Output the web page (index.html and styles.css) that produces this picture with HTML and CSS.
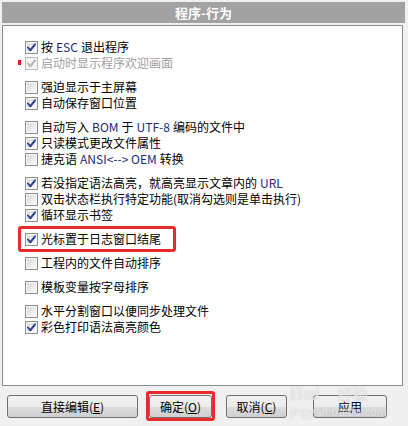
FILE: index.html
```html
<!DOCTYPE html>
<html lang="zh-CN">
<head>
    <meta charset="UTF-8">
    <title>程序-行为</title>
    <link rel="stylesheet" href="styles.css">
</head>
<body>
    <div class="title">程序-行为</div>

    <div class="panel">
        <div class="group">
            <label class="row"><span class="cb on"><svg viewBox="0 0 11 11"><path d="M2 5.5 L4.3 8.3 L9 2.3"/></svg></span>按 <span class="en">ESC</span> 退出程序</label>
            <label class="row off"><span class="mark"></span><span class="cb on"><svg viewBox="0 0 11 11"><path d="M2 5.5 L4.3 8.3 L9 2.3"/></svg></span>启动时显示程序欢迎画面</label>
        </div>
        <div class="group">
            <label class="row"><span class="cb"></span>强迫显示于主屏幕</label>
            <label class="row"><span class="cb on"><svg viewBox="0 0 11 11"><path d="M2 5.5 L4.3 8.3 L9 2.3"/></svg></span>自动保存窗口位置</label>
        </div>
        <div class="group">
            <label class="row"><span class="cb"></span>自动写入 <span class="en">BOM</span> 于 <span class="en">UTF-8</span> 编码的文件中</label>
            <label class="row"><span class="cb on"><svg viewBox="0 0 11 11"><path d="M2 5.5 L4.3 8.3 L9 2.3"/></svg></span>只读模式更改文件属性</label>
            <label class="row"><span class="cb"></span>捷克语 <span class="en">ANSI&lt;--&gt; OEM</span> 转换</label>
        </div>
        <div class="group">
            <label class="row"><span class="cb on"><svg viewBox="0 0 11 11"><path d="M2 5.5 L4.3 8.3 L9 2.3"/></svg></span>若没指定语法高亮，就高亮显示文章内的 <span class="en">URL</span></label>
            <label class="row"><span class="cb"></span>双击状态栏执行特定功能(取消勾选则是单击执行)</label>
            <label class="row"><span class="cb on"><svg viewBox="0 0 11 11"><path d="M2 5.5 L4.3 8.3 L9 2.3"/></svg></span>循环显示书签</label>
        </div>
        <div class="group">
            <label class="row"><span class="hl"></span><span class="cb on"><svg viewBox="0 0 11 11"><path d="M2 5.5 L4.3 8.3 L9 2.3"/></svg></span>光标置于日志窗口结尾</label>
        </div>
        <div class="group">
            <label class="row"><span class="cb"></span>工程内的文件自动排序</label>
        </div>
        <div class="group">
            <label class="row"><span class="cb"></span>模板变量按字母排序</label>
        </div>
        <div class="group">
            <label class="row"><span class="cb"></span>水平分割窗口以便同步处理文件</label>
            <label class="row"><span class="cb on"><svg viewBox="0 0 11 11"><path d="M2 5.5 L4.3 8.3 L9 2.3"/></svg></span>彩色打印语法高亮颜色</label>
        </div>
    </div>

    <div class="buttons">
        <button class="btn b-edit">直接编辑(<u>E</u>)</button>
        <button class="btn b-ok"><span class="hl-btn"></span>确定(<u>O</u>)</button>
        <button class="btn b-cancel">取消(<u>C</u>)</button>
        <button class="btn b-apply">应用</button>
    </div>

    <div class="watermark">
        <div class="wm-top">Bai<span class="wm-cn">经验</span></div>
        <div class="wm-url">jingyan.baidu.com</div>
    </div>
</body>
</html>
```

FILE: styles.css
```css
* {
    margin: 0;
    padding: 0;
    box-sizing: border-box;
}

body {
    width: 408px;
    height: 426px;
    background: #f0f0f0;
    font-family: "Noto Sans CJK SC", sans-serif;
    font-size: 12px;
    color: #000;
    position: relative;
    overflow: hidden;
}

.title {
    margin: 2px 3px 0 2px;
    height: 21px;
    background: #a2a2a2;
    color: #fff;
    font-size: 13px;
    font-weight: bold;
    line-height: 21px;
    text-align: center;
}

.panel {
    margin: 2px 5px 0 2px;
    height: 361px;
    background: #fff;
    border: 1px solid #8a8d96;
    padding: 13px 0 0 22px;
    display: flex;
    flex-direction: column;
    gap: 8px;
}

.group {
    display: flex;
    flex-direction: column;
}

.row {
    position: relative;
    display: flex;
    align-items: center;
    gap: 3px;
    height: 16px;
    line-height: 16px;
    white-space: nowrap;
}

.row.off {
    color: #a0a0a0;
}

.en {
    color: #1c2a78;
}

.cb {
    flex: none;
    width: 13px;
    height: 13px;
    border: 1px solid #8e8f8f;
    background: linear-gradient(135deg, #d6d6d6 0%, #f2f2f2 70%, #fbfbfb 100%);
    box-shadow: inset 0 0 0 1px #f4f4f4;
    display: flex;
    align-items: center;
    justify-content: center;
}

.cb svg {
    width: 11px;
    height: 11px;
}

.cb svg path {
    fill: none;
    stroke: #283c96;
    stroke-width: 1.9;
    stroke-linecap: round;
    stroke-linejoin: round;
}

.off .cb {
    border-color: #bcbcbc;
    background: #f4f4f4;
}

.off .cb svg path {
    stroke: #b4b4b4;
}

.mark {
    position: absolute;
    left: -7px;
    top: 5px;
    width: 3px;
    height: 5px;
    background: #e8141c;
}

.hl {
    position: absolute;
    left: -7px;
    top: -5px;
    width: 158px;
    height: 26px;
    border: 3px solid #ea2a2c;
    border-radius: 3px;
}

.buttons {
    display: flex;
    margin-top: 9px;
}

.btn {
    position: relative;
    height: 23px;
    border: 1px solid #707070;
    border-radius: 3px;
    background: linear-gradient(#f2f2f2 0%, #ebebeb 50%, #dddddd 51%, #cfcfcf 100%);
    font-family: "Noto Sans CJK SC", sans-serif;
    font-size: 12px;
    color: #000;
    line-height: 21px;
}

.btn u {
    text-decoration: underline;
}

.b-edit {
    width: 131px;
    margin-left: 7px;
}

.b-ok {
    width: 63px;
    margin-left: 11px;
}

.b-cancel {
    width: 61px;
    margin-left: 14px;
}

.b-apply {
    width: 74px;
    margin-left: 26px;
}

.hl-btn {
    position: absolute;
    left: -4px;
    top: -5px;
    width: 69px;
    height: 30px;
    border: 3px solid #ea2a2c;
    border-radius: 3px;
}

.watermark {
    position: absolute;
    left: 290px;
    top: 384px;
    color: rgba(255, 255, 255, 0.6);
    text-shadow: 0 0 1px rgba(140, 140, 140, 0.45);
    font-family: "Liberation Sans", "Noto Sans CJK SC", sans-serif;
    pointer-events: none;
}

.wm-top {
    font-size: 19px;
    font-weight: bold;
    line-height: 20px;
}

.wm-cn {
    font-size: 15px;
    margin-left: 18px;
}

.wm-url {
    font-size: 12px;
    line-height: 14px;
}
```
